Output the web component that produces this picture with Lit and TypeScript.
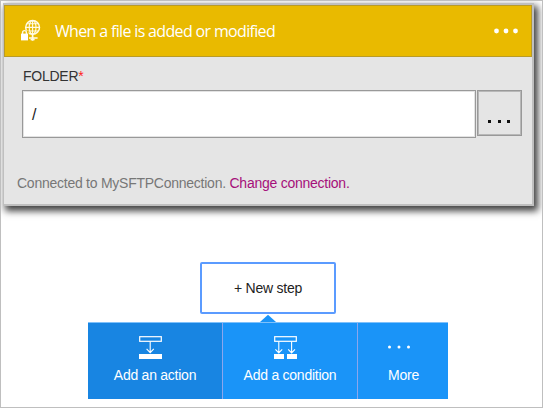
import { LitElement, html, css, svg } from "lit";
import { customElement } from "lit/decorators.js";

const connectorIcon = svg`
  <svg class="connector" width="22" height="24" viewBox="0 0 22 24" fill="none" stroke="#fffbe6" stroke-width="1.1">
    <circle cx="12.6" cy="8.4" r="6.9" stroke-width="1.5"/>
    <ellipse cx="12.6" cy="8.4" rx="3.4" ry="6.9"/>
    <path d="M12.6 1.4v14M5.7 8.4h13.8M7 4.7h11.2M7 12h11.2"/>
    <path d="M12.6 15v6.8M9 19h8.6" stroke-width="1.7"/>
    <path d="M10.6 20.5h4" stroke-width="1.6"/>
    <path d="M0 11.6h8.6v10.4H0z" fill="#e9ba00" stroke="none"/>
    <path d="M2.6 15v-1.4a1.9 2 0 0 1 3.8 0v1.4" stroke-width="1.4"/>
    <rect x="1" y="14.6" width="7" height="6.8" fill="#fff" stroke="none"/>
  </svg>`;

const actionIcon = svg`
  <svg class="glyph" width="23" height="23" viewBox="0 0 23 23" fill="none" stroke="#fff">
    <rect x=".7" y=".7" width="21.6" height="4.6" stroke-width="1.2"/>
    <path d="M11.2 5.5v11M7.6 12.8l3.6 3.8 3.6-3.8" stroke-width="1.1"/>
    <rect x="0" y="18" width="23" height="5" fill="#fff" stroke="none"/>
  </svg>`;

const conditionIcon = svg`
  <svg class="glyph" width="23" height="23" viewBox="0 0 23 23" fill="none" stroke="#fff">
    <rect x=".7" y=".7" width="21.6" height="4.6" stroke-width="1.2"/>
    <path d="M4.8 5.5v11.3M1.4 13.4l3.4 3.6 3.4-3.6M17.6 5.5v11.3M14.2 13.4l3.4 3.6 3.4-3.6" stroke-width="1.1"/>
    <path d="M0 18h10v5H0zM13 18h10v5H13z" fill="#fff" stroke="none"/>
  </svg>`;

const dots = (width: number, gap: number, r: number) => svg`
  <svg class="dots" width=${width} height="6" viewBox="0 0 ${width} 6" fill="#fff">
    ${[0, 1, 2].map((i) => svg`<circle cx=${width / 2 + (i - 1) * gap} cy="3" r=${r}/>`)}
  </svg>`;

@customElement("app-root")
export class AppRoot extends LitElement {
  static styles = css`
    :host {
      display: flex;
      flex-direction: column;
      box-sizing: border-box;
      width: 543px;
      height: 408px;
      border: 1px solid #bfbfbf;
      padding: 2px;
      background: #fff;
      overflow: hidden;
      font-family: "Liberation Sans", Arial, sans-serif;
      font-size: 14px;
      letter-spacing: -.25px;
      color: #222;
    }
    * { box-sizing: border-box; }
    svg { display: block; flex: none; }
    .card {
      width: 531px;
      height: 203px;
      flex: none;
      border: solid #bfbfbf;
      border-width: 2px 2px 2px 1px;
      background: #e5e5e5;
      box-shadow: 3px 4px 7px 1px rgba(0, 0, 0, .75);
    }
    .head {
      display: flex;
      align-items: center;
      height: 52px;
      padding: 0 11px 0 15px;
      border: 1px solid #b99b27;
      background: #e9ba00;
      color: #fff;
    }
    .head .dots { margin-bottom: 1px; }
    .title {
      flex: 1;
      padding: 0 0 1px 13px;
      font: 16px/22px "Open Sans", "Noto Sans", sans-serif;
      letter-spacing: -.66px;
      white-space: nowrap;
    }
    .label {
      margin: 11px 0 0 19px;
      line-height: 16px;
      color: #333;
    }
    .required { color: #f22; }
    .field {
      display: flex;
      align-items: flex-start;
      gap: 1px;
      margin: 6px 0 0 18px;
    }
    .input {
      width: 454px;
      height: 48px;
      padding-left: 9px;
      border: 1px solid #999;
      background: #fff;
      box-shadow: inset 0 0 0 1px #e3e3e3;
      font-size: 16px;
      line-height: 47px;
    }
    .browse {
      display: flex;
      align-items: center;
      justify-content: center;
      gap: 6.5px;
      width: 45px;
      height: 46px;
      padding: 17px 1px 0 0;
      border: 1px solid #999;
      box-shadow: inset 0 0 0 1px #b8b8b8;
    }
    .browse i { width: 3px; height: 3px; background: #111; }
    .status {
      margin: 37px 0 0 13px;
      line-height: 16px;
      color: #777;
      white-space: pre;
    }
    .link { color: #a5107a; }
    .step {
      display: flex;
      align-items: center;
      justify-content: center;
      width: 136px;
      height: 52px;
      flex: none;
      margin: 56px 0 0 197px;
      border: 2px solid #5b9bff;
      border-radius: 2px;
      background: #fff;
    }
    .arrow {
      width: 16px;
      height: 8px;
      flex: none;
      margin-left: 257px;
      background: #1a94f8;
      clip-path: polygon(50% 10%, 100% 100%, 0 100%);
    }
    .menu {
      display: flex;
      width: 360px;
      height: 77px;
      flex: none;
      margin-left: 85px;
      border-top: 1px solid #7fc1fb;
      background: #1a94f8;
      color: #fff;
    }
    .item {
      display: flex;
      flex-direction: column;
      align-items: center;
      width: 135px;
      padding-top: 13px;
      border-right: 1px solid #8ba6ee;
      line-height: 16px;
    }
    .item.active { background: #1885e2; }
    .item.more { width: 90px; border: 0; padding-left: 1px; }
    .glyph { margin: 0 10px 8px 0; }
    .item .dots { margin: 8px 9px 17px 0; }
  `;

  render() {
    return html`
      <section class="card">
        <header class="head">
          ${connectorIcon}
          <span class="title">When a file is added or modified</span>
          ${dots(28, 9.5, 2.4)}
        </header>
        <div class="label">FOLDER<span class="required">*</span></div>
        <div class="field">
          <div class="input">/</div>
          <div class="browse"><i></i><i></i><i></i></div>
        </div>
        <div class="status">Connected to MySFTPConnection. <span class="link">Change connection.</span></div>
      </section>
      <div class="step">+ New step</div>
      <div class="arrow"></div>
      <nav class="menu">
        <div class="item active">${actionIcon}<span>Add an action</span></div>
        <div class="item">${conditionIcon}<span>Add a condition</span></div>
        <div class="item more">${dots(26, 9.5, 1.5)}<span>More</span></div>
      </nav>
    `;
  }
}
